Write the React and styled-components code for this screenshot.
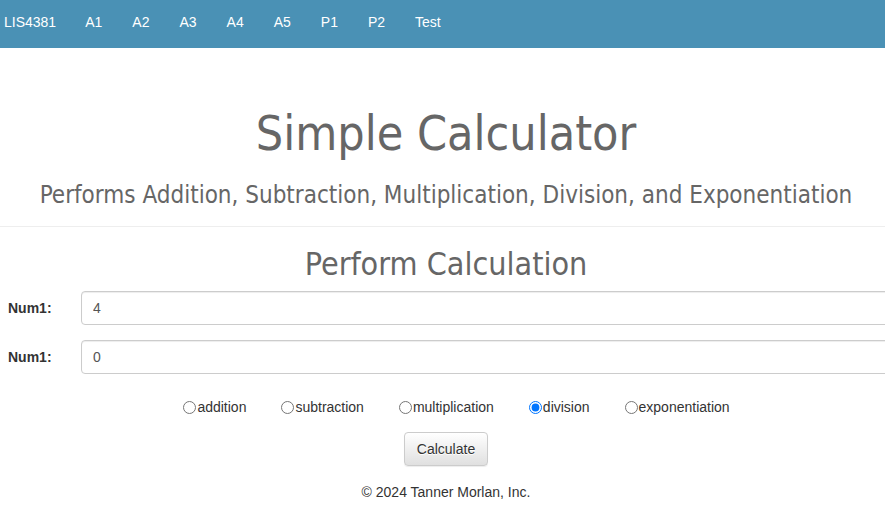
import React, { useState } from "react";
import styled, { createGlobalStyle } from "styled-components";

const Global = createGlobalStyle`
  html, body { margin: 0; padding: 0; overflow: hidden; background: #fff; }
  body { font-family: "Liberation Sans", Arial, sans-serif; font-size: 14px; color: #333; }
  * { box-sizing: border-box; }
`;

const Page = styled.div`
  width: 892px;
`;

const Nav = styled.nav`
  height: 48px;
  background: #4a91b5;
  display: flex;
  align-items: center;
  padding-left: 4px;
`;

const NavLink = styled.a`
  color: #fff;
  font-size: 14px;
  text-decoration: none;
  padding-right: ${(p) => (p.$brand ? "14px" : "15px")};
  padding-left: ${(p) => (p.$brand ? "0" : "15px")};
  margin-top: -4px;
`;

const Header = styled.header`
  border-bottom: 1px solid #eee;
  text-align: center;
  padding: 57px 0 17px;
`;

const Title = styled.h1`
  margin: 0;
  font-family: "DejaVu Sans Condensed", "DejaVu Sans", sans-serif;
  font-weight: normal;
  font-size: 48px;
  line-height: 56px;
  color: #666;
`;

const Subtitle = styled.h2`
  margin: 20px 0 0;
  font-family: "DejaVu Sans Condensed", "DejaVu Sans", sans-serif;
  font-weight: normal;
  font-size: 24px;
  line-height: 28px;
  color: #666;
`;

const Section = styled.main`
  padding-top: 17px;
`;

const SectionTitle = styled.h2`
  margin: 0 0 7px;
  text-align: center;
  font-family: "DejaVu Sans Condensed", "DejaVu Sans", sans-serif;
  font-weight: normal;
  font-size: 32px;
  line-height: 40px;
  color: #666;
`;

const Row = styled.div`
  display: grid;
  grid-template-columns: 81px 1fr;
  align-items: center;
  margin-bottom: 15px;
`;

const Label = styled.label`
  padding-left: 8px;
  font-weight: bold;
  font-size: 14px;
  line-height: 20px;
  color: #333;
`;

const Input = styled.input`
  display: block;
  height: 34px;
  width: 100%;
  padding: 6px 12px 6px 11px;
  font-family: "Liberation Sans", Arial, sans-serif;
  font-size: 14px;
  color: #555;
  border: 1px solid #ccc;
  border-radius: 4px;
  box-shadow: inset 0 1px 1px rgba(0, 0, 0, 0.075);
  background: #fff;
  outline: none;
`;

const Radios = styled.div`
  display: flex;
  justify-content: center;
  gap: 35px;
  padding-left: 21px;
  margin-top: 23px;
`;

const RadioLabel = styled.label`
  display: flex;
  align-items: center;
  font-size: 14px;
  line-height: 20px;
  color: #333;
  cursor: pointer;
`;

const Radio = styled.input`
  margin: 0 1px 0 0;
  width: 13px;
  height: 13px;
`;

const ButtonRow = styled.div`
  display: flex;
  justify-content: center;
  margin-top: 15px;
`;

const Button = styled.button`
  height: 34px;
  padding: 6px 12px;
  font-family: "Liberation Sans", Arial, sans-serif;
  font-size: 14px;
  color: #333;
  border: 1px solid #ccc;
  border-radius: 4px;
  background: linear-gradient(to bottom, #fff 0, #e0e0e0 100%);
  box-shadow: inset 0 1px 0 rgba(255, 255, 255, 0.15), 0 1px 1px rgba(0, 0, 0, 0.075);
  text-shadow: 0 1px 0 #fff;
`;

const Footer = styled.footer`
  text-align: center;
  font-size: 14px;
  line-height: 20px;
  color: #333;
  margin-top: 16px;
`;

const links = ["A1", "A2", "A3", "A4", "A5", "P1", "P2", "Test"];
const ops = ["addition", "subtraction", "multiplication", "division", "exponentiation"];

export default function App() {
  const [op, setOp] = useState("division");
  return (
    <Page>
      <Global />
      <Nav>
        <NavLink $brand href="#">LIS4381</NavLink>
        {links.map((l) => (
          <NavLink key={l} href="#">{l}</NavLink>
        ))}
      </Nav>
      <Header>
        <Title>Simple Calculator</Title>
        <Subtitle>Performs Addition, Subtraction, Multiplication, Division, and Exponentiation</Subtitle>
      </Header>
      <Section>
        <SectionTitle>Perform Calculation</SectionTitle>
        <Row>
          <Label>Num1:</Label>
          <Input defaultValue="4" />
        </Row>
        <Row>
          <Label>Num1:</Label>
          <Input defaultValue="0" />
        </Row>
        <Radios>
          {ops.map((o) => (
            <RadioLabel key={o}>
              <Radio type="radio" name="op" checked={op === o} onChange={() => setOp(o)} />
              {o}
            </RadioLabel>
          ))}
        </Radios>
        <ButtonRow>
          <Button>Calculate</Button>
        </ButtonRow>
        <Footer>© 2024 Tanner Morlan, Inc.</Footer>
      </Section>
    </Page>
  );
}
